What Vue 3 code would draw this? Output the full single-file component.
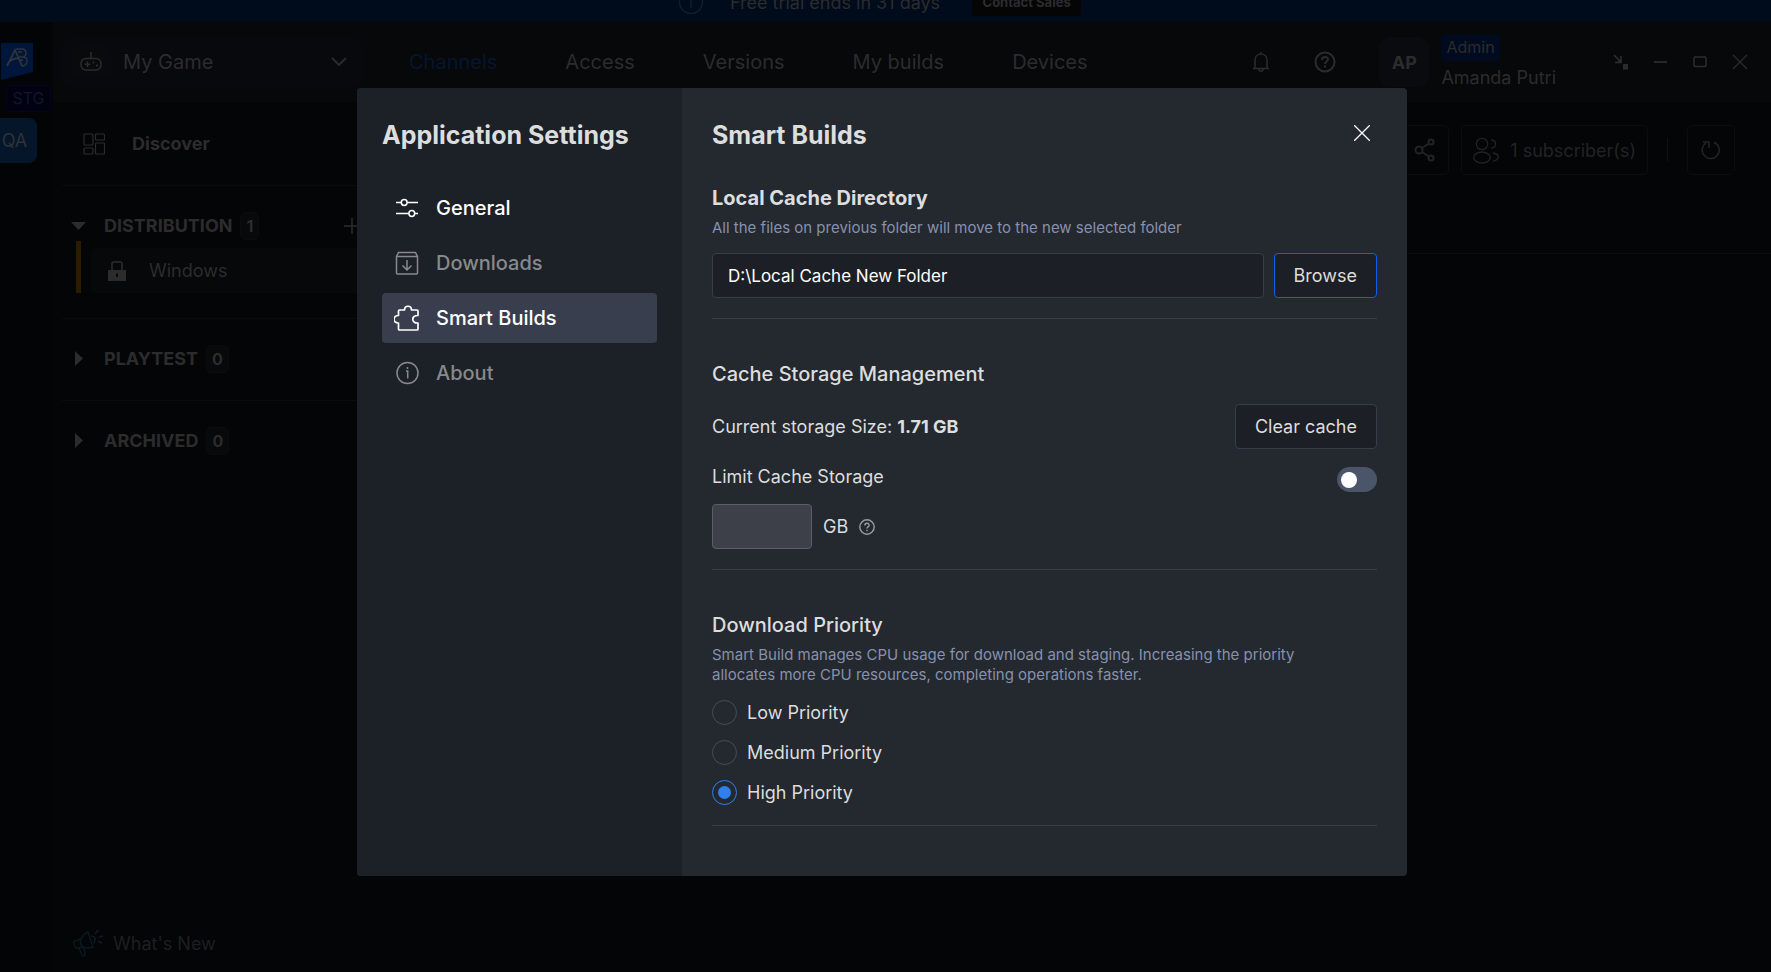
<script setup>
import { ref } from 'vue'

const tabs = ['Channels', 'Access', 'Versions', 'My builds', 'Devices']
const activeTab = ref('Channels')

const groups = ref([
  { name: 'DISTRIBUTION', count: 1, open: true, items: ['Windows'] },
  { name: 'PLAYTEST', count: 0, open: false, items: [] },
  { name: 'ARCHIVED', count: 0, open: false, items: [] },
])

const sections = [
  { id: 'general', label: 'General', bright: true },
  { id: 'downloads', label: 'Downloads', bright: false },
  { id: 'smart', label: 'Smart Builds', bright: true },
  { id: 'about', label: 'About', bright: false },
]
const activeSection = ref('smart')

const cacheDir = ref('D:\\Local Cache New Folder')
const limitCache = ref(false)
const limitSize = ref('')
const priorities = ['Low Priority', 'Medium Priority', 'High Priority']
const priority = ref('High Priority')
</script>

<template>
  <div class="app">
    <div class="banner">
      <div class="banner-inner">
        <svg class="banner-icon" width="26" height="26" viewBox="0 0 26 26" fill="none" stroke="currentColor" stroke-width="1.5">
          <circle cx="13" cy="13" r="11.5" />
          <path d="M13 11v8M13 7v2" />
        </svg>
        <span class="banner-text">Free trial ends in 31 days</span>
        <button class="banner-button" type="button">Contact Sales</button>
      </div>
    </div>

    <div class="shell">
      <aside class="rail">
        <svg class="logo" width="33" height="37" viewBox="0 0 33 37" fill="none">
          <path d="M1 0h32v29L1 37z" fill="#00163b" />
          <path d="M7 23L15 7l7 16M10 18q4-3 9-3" stroke="#30353c" stroke-width="1.8" />
          <path d="M16 6h6q4 0 4 4t-4 4h-3M18 9h4M22 14q6 0 5 5-1 4-5 4M20 17h3" stroke="#30353c" stroke-width="1.3" />
        </svg>
        <span class="stage">STG</span>
        <button class="workspace" type="button">QA</button>
      </aside>

      <div class="workarea">
        <header class="topbar">
          <button class="game" type="button">
            <span class="game-icon">
              <svg width="22" height="20" viewBox="0 0 22 20" fill="none" stroke="currentColor" stroke-width="1.5">
                <path d="M11 0v6" />
                <rect x="1" y="6.5" width="20" height="11.5" rx="5" />
                <path d="M7.500 9.500v5.500M4.750 12.250h5.500" />
                <path d="M12.500 10.500h1.800M16 13.500h1.800" stroke-width="1.800" />
              </svg>
            </span>
            <span class="game-name">My Game</span>
            <svg width="16" height="10" viewBox="0 0 16 10" fill="none" stroke="currentColor" stroke-width="1.8">
              <path d="M1 1l7 7 7-7" />
            </svg>
          </button>

          <nav class="tabs">
            <a v-for="t in tabs" :key="t" href="#" :class="['tab', { active: t === activeTab }]" @click.prevent="activeTab = t">{{ t }}</a>
          </nav>

          <div class="top-icons">
            <button class="icon-button" type="button" aria-label="Notifications">
              <svg width="18" height="20" viewBox="0 0 18 20" fill="none" stroke="currentColor" stroke-width="1.5">
                <path d="M9 0v2M1 16.500h16M3 16.500V8c0-8 12-8 12 0v8.500M7 17c0 3 4 3 4 0" />
              </svg>
            </button>
            <button class="icon-button" type="button" aria-label="Help">
              <svg width="22" height="22" viewBox="0 0 22 22" fill="none" stroke="currentColor" stroke-width="2">
                <circle cx="11" cy="11" r="9.500" />
                <path d="M8 9c0-4 6-4 6-.500 0 2-3 2-3 4.500M11 14.500v2" />
              </svg>
            </button>
          </div>

          <div class="user">
            <span class="avatar">AP</span>
            <div class="user-info">
              <span class="role">Admin</span>
              <span class="user-name">Amanda Putri</span>
            </div>
          </div>

          <div class="window-controls">
            <button class="icon-button" type="button" aria-label="Compact view">
              <svg width="16" height="16" viewBox="0 0 16 16" fill="none" stroke="currentColor" stroke-width="1.600">
                <path d="M1 1l6 6M8 2v6.500H2" />
                <path d="M4 8.500h4V4z" fill="currentColor" stroke="none" />
                <rect x="10" y="10" width="5" height="5.500" fill="currentColor" stroke="none" />
              </svg>
            </button>
            <button class="icon-button" type="button" aria-label="Minimize">
              <svg width="14" height="14" viewBox="0 0 14 14" stroke="currentColor" stroke-width="1.800"><path d="M0 7h13" /></svg>
            </button>
            <button class="icon-button" type="button" aria-label="Maximize">
              <svg width="14" height="14" viewBox="0 0 14 14" fill="none" stroke="currentColor" stroke-width="1.500"><rect x="1" y="2" width="12" height="9.500" rx="1" /></svg>
            </button>
            <button class="icon-button" type="button" aria-label="Close window">
              <svg width="16" height="16" viewBox="0 0 16 16" stroke="currentColor" stroke-width="1.300"><path d="M1 1l14 14M15 1L1 15" /></svg>
            </button>
          </div>
        </header>

        <div class="content">
          <nav class="sidebar">
            <a class="discover" href="#" @click.prevent>
              <svg width="22" height="22" viewBox="0 0 22 22" fill="none" stroke="currentColor" stroke-width="1.200">
                <rect x="1" y="1" width="9" height="11" rx="1" />
                <rect x="12.500" y="1" width="9" height="6" rx="1" />
                <rect x="1" y="15" width="9" height="6" rx="1" />
                <rect x="12.500" y="10" width="9" height="11" rx="1" />
              </svg>
              <span>Discover</span>
            </a>

            <section v-for="g in groups" :key="g.name" class="group">
              <div class="group-head">
                <button class="group-toggle" type="button" :aria-expanded="g.open" @click="g.open = !g.open">
                  <span class="caret">
                    <svg v-if="g.open" width="15" height="8" viewBox="0 0 15 8" fill="currentColor"><path d="M0 0h15L7.500 8z" /></svg>
                    <svg v-else width="8" height="15" viewBox="0 0 8 15" fill="currentColor"><path d="M0 0v15l8-7.500z" /></svg>
                  </span>
                  <span>{{ g.name }}</span>
                  <span class="count">{{ g.count }}</span>
                </button>
                <button v-if="g.open" class="icon-button" type="button" aria-label="Add channel">
                  <svg width="16" height="16" viewBox="0 0 16 16" stroke="currentColor" stroke-width="1.500"><path d="M8 0v16M0 8h16" /></svg>
                </button>
              </div>
              <ul v-if="g.open" class="channels">
                <li v-for="item in g.items" :key="item">
                  <a class="channel" href="#" @click.prevent>
                    <svg width="18" height="20" viewBox="0 0 18 20">
                      <path d="M4 9V3q0-2 2-2h6q2 0 2 2v6" fill="none" stroke="currentColor" stroke-width="1.500" />
                      <path d="M0 9h18v11H0z" fill="currentColor" />
                      <path d="M8 12.500h2V16H8z" fill="#060809" />
                    </svg>
                    <span>{{ item }}</span>
                  </a>
                </li>
              </ul>
            </section>

            <a class="whats-new" href="#" @click.prevent>
              <svg width="30" height="27" viewBox="0 0 30 27" fill="none" stroke-width="1.500">
                <path d="M8 9l-6 2q-2 1-1 3l1 3q1 2 3 1l5-1M6 18l3 7q1 2 3 0v-3l-2-4M8 9q2-5 7-7l5 15q-6 2-10 0M8 9q-2 5 2 8" stroke="#071a22" />
                <path d="M18 6q6 0 3 7M22 4l3-4M26 7l4-1M25 11l4 2" stroke="#16191d" />
              </svg>
              <span>What's New</span>
            </a>
          </nav>

          <main class="main">
            <div class="toolbar">
              <button class="tool square" type="button" aria-label="Share">
                <svg width="22" height="24" viewBox="0 0 22 24" fill="none" stroke="currentColor" stroke-width="2">
                  <circle cx="5" cy="12" r="3.500" />
                  <circle cx="17" cy="4" r="2.500" />
                  <circle cx="17" cy="20" r="2.500" />
                  <path d="M8 10l7-4.500M8 14l7 4.500" />
                </svg>
              </button>
              <button class="tool" type="button">
                <svg width="26" height="27" viewBox="0 0 26 27" fill="none" stroke="currentColor" stroke-width="1.300">
                  <circle cx="9" cy="7" r="5.700" />
                  <ellipse cx="9" cy="20.500" rx="8.300" ry="5.500" />
                  <path d="M18 3c6 0 6 8 0 8M20 16c7 1 7 7 0 8" />
                </svg>
                <span>1 subscriber(s)</span>
              </button>
              <span class="divider"></span>
              <button class="tool square" type="button" aria-label="Refresh">
                <svg width="20" height="20" viewBox="0 0 20 20" fill="none" stroke="currentColor" stroke-width="1.500">
                  <path d="M13 2.200A8.500 8.500 0 1 1 5 3M2 2h6v6" />
                </svg>
              </button>
            </div>
          </main>
        </div>
      </div>
    </div>

    <div class="overlay">
      <div class="modal" role="dialog" aria-modal="true" aria-labelledby="settings-title">
        <div class="modal-nav">
          <h1 id="settings-title">Application Settings</h1>
          <nav class="section-list">
            <button
              v-for="s in sections"
              :key="s.id"
              type="button"
              :class="['section-item', { bright: s.bright, selected: s.id === activeSection }]"
              @click="activeSection = s.id"
            >
              <svg v-if="s.id === 'general'" width="26" height="26" viewBox="0 0 26 26" fill="none" stroke="currentColor" stroke-width="1.500">
                <path d="M2 7.500h5.500M13 7.500h11M2 18.500h13M21 18.500h3" />
                <circle cx="10.200" cy="7.500" r="2.900" />
                <circle cx="17.800" cy="18.500" r="2.900" />
              </svg>
              <svg v-else-if="s.id === 'downloads'" width="26" height="26" viewBox="0 0 26 26" fill="none" stroke="currentColor" stroke-width="1.500">
                <path d="M2.500 6.500V23q0 1 1 1h19q1 0 1-1V6.500zM2.500 6.500l2-4h17l2 4M13 10v10M8.500 15.500L13 20l4.500-4.500" />
              </svg>
              <svg v-else-if="s.id === 'smart'" width="26" height="26" viewBox="0 0 26 26" fill="none" stroke="currentColor" stroke-width="1.700" stroke-linejoin="round">
                <path d="M4.500 6q0-1 1-1h5c0-5 7-5 7 0h5.500q1 0 1 1v4.500c-7-.500-7 8 0 7.500V24q0 1-1 1H5.500q-1 0-1-1v-6c-6 .500-6-8 0-7.500z" />
              </svg>
              <svg v-else width="26" height="26" viewBox="0 0 26 26" fill="none" stroke="currentColor" stroke-width="1.500">
                <circle cx="13.500" cy="13" r="10.500" />
                <path d="M12 11h1.700v7.500M13.500 7v2" />
              </svg>
              <span>{{ s.label }}</span>
            </button>
          </nav>
        </div>

        <div class="modal-body">
          <div class="modal-head">
            <h2>Smart Builds</h2>
            <button class="close" type="button" aria-label="Close">
              <svg width="16" height="16" viewBox="0 0 16 16" stroke="currentColor" stroke-width="1.300"><path d="M0 0l16 16M16 0L0 16" /></svg>
            </button>
          </div>

          <section class="setting">
            <h3 id="cache-dir-title" class="strong">Local Cache Directory</h3>
            <p class="hint">All the files on previous folder will move to the new selected folder</p>
            <div class="path-row">
              <input v-model="cacheDir" class="path" type="text" aria-labelledby="cache-dir-title" />
              <button class="action primary" type="button">Browse</button>
            </div>
          </section>

          <section class="setting">
            <h3>Cache Storage Management</h3>
            <div class="size-row">
              <span>Current storage Size: <b>1.71 GB</b></span>
              <button class="action" type="button">Clear cache</button>
            </div>
            <div class="limit-row">
              <label for="limit-cache">Limit Cache Storage</label>
              <input id="limit-cache" v-model="limitCache" class="switch" type="checkbox" role="switch" />
            </div>
            <div class="limit-size">
              <input id="limit-size" v-model="limitSize" class="size" type="text" :disabled="!limitCache" />
              <label for="limit-size">GB</label>
              <svg class="help" width="16" height="16" viewBox="0 0 16 16" fill="none" stroke="currentColor" stroke-width="1.400">
                <circle cx="8" cy="8" r="7.200" />
                <path d="M5.800 6.500c0-3 4.400-3 4.400-.300 0 1.500-2.200 1.500-2.200 3.300M8 10.700v1.500" />
              </svg>
            </div>
          </section>

          <section class="setting">
            <h3>Download Priority</h3>
            <p class="hint">Smart Build manages CPU usage for download and staging. Increasing the priority allocates more CPU resources, completing operations faster.</p>
            <div class="radios">
              <label v-for="p in priorities" :key="p" class="radio">
                <input v-model="priority" type="radio" name="priority" :value="p" />
                <span>{{ p }}</span>
              </label>
            </div>
          </section>
        </div>
      </div>
    </div>
  </div>
</template>

<style>
body {
  background: #040507;
}
</style>

<style scoped>
* {
  box-sizing: border-box;
}

.app {
  position: relative;
  display: flex;
  flex-direction: column;
  min-height: 100vh;
  overflow: hidden;
  background: #040507;
  color: #2c2c2d;
  font-family: Inter, "Liberation Sans", sans-serif;
  font-size: 18px;
}

button {
  padding: 0;
  border: 0;
  background: none;
  color: inherit;
  font: inherit;
}

input {
  margin: 0;
  font: inherit;
}

a {
  color: inherit;
  text-decoration: none;
}

svg {
  flex: none;
  display: block;
}

h1,
h2,
h3,
p,
ul {
  margin: 0;
  padding: 0;
  list-style: none;
}

/* Trial banner */
.banner {
  display: flex;
  flex-direction: column;
  justify-content: flex-end;
  height: 22px;
  overflow: hidden;
  background: #000b1c;
}

.banner-inner {
  flex: none;
  display: flex;
  align-items: center;
  justify-content: center;
  height: 40px;
  padding-right: 12px;
}

.banner-icon {
  margin-right: 26px;
  color: #121c2b;
}

.banner-text {
  margin-right: 32px;
}

.banner-button {
  width: 109px;
  height: 28px;
  border-radius: 4px;
  background: #050506;
  font-size: 13px;
  font-weight: 700;
}

/* Shell */
.shell {
  flex: 1;
  display: flex;
}

.rail {
  flex: none;
  display: flex;
  flex-direction: column;
  align-items: flex-start;
  width: 53px;
  padding-top: 21px;
  background: #030405;
}

.stage {
  width: 45px;
  height: 27px;
  margin: 5px 0 6px 6px;
  border: 1px solid #030322;
  border-radius: 2px;
  background: #01010f;
  color: #111534;
  font-size: 16px;
  line-height: 25px;
  text-align: center;
}

.workspace {
  width: 37px;
  height: 45px;
  padding-right: 8px;
  border-radius: 0 8px 8px 0;
  background: #06162a;
  color: #2d3238;
}

.workarea {
  flex: 1;
  display: flex;
  flex-direction: column;
  min-width: 0;
}

.topbar {
  display: flex;
  align-items: center;
  height: 80px;
  padding: 0 23px 0 9px;
  background: #070809;
}

.game {
  display: flex;
  align-items: center;
  width: 300px;
  height: 50px;
  padding: 0 15px 0 9px;
  border-radius: 8px;
  background: #08090d;
}

.game-icon {
  display: grid;
  place-items: center;
  width: 40px;
  height: 32px;
  margin-right: 12px;
  border-radius: 6px;
  background: #090a0c;
}

.game-name {
  flex: 1;
  font-size: 20px;
  text-align: left;
}

.tabs {
  display: flex;
  gap: 68px;
  margin-left: 47px;
  font-size: 20px;
}

.tab.active {
  color: #061530;
}

.top-icons {
  display: flex;
  align-items: center;
  gap: 44px;
  margin-left: auto;
}

.user {
  display: flex;
  align-items: center;
  gap: 12px;
  margin-left: 43px;
}

.avatar {
  display: grid;
  place-items: center;
  width: 50px;
  height: 50px;
  border-radius: 12px;
  background: #0a0b0e;
  font-weight: 700;
}

.user-info {
  display: flex;
  flex-direction: column;
  align-items: flex-start;
  gap: 6px;
  padding-bottom: 2px;
}

.role {
  height: 27px;
  padding: 0 5px;
  border-radius: 4px;
  background: #000b20;
  font-size: 16px;
  line-height: 27px;
}

.user-name {
  line-height: 22px;
}

.window-controls {
  display: flex;
  align-items: center;
  gap: 25px;
  margin-left: 57px;
}

.content {
  flex: 1;
  display: flex;
}

/* Sidebar */
.sidebar {
  flex: none;
  display: flex;
  flex-direction: column;
  width: 316px;
  padding: 0 0 15px 9px;
}

.discover {
  display: flex;
  align-items: center;
  gap: 27px;
  height: 84px;
  padding: 0 0 0 21px;
  border-bottom: 1px solid #0a0b0c;
  font-weight: 700;
}

.group {
  min-height: 82px;
  padding: 25px 0 0 9px;
}

.group + .group {
  border-top: 1px solid #0a0b0c;
}

.group-head {
  display: flex;
  align-items: center;
  justify-content: space-between;
  height: 29px;
  padding-right: 9px;
}

.group-toggle {
  display: flex;
  align-items: center;
  font-weight: 700;
}

.caret {
  display: grid;
  place-items: center;
  width: 15px;
  margin-right: 18px;
}

.count {
  height: 28px;
  min-width: 19px;
  margin-left: 8px;
  padding: 0 5px;
  border: 1px solid #0b0c0e;
  border-radius: 5px;
  background: #08090a;
  font-size: 16px;
  line-height: 26px;
}

.channels {
  margin: 1px 0 25px 5px;
  padding: 7px 0 0 10px;
  border-left: 5px solid #2b1c00;
}

.channel {
  display: flex;
  align-items: center;
  gap: 23px;
  height: 45px;
  padding-left: 17px;
  border-radius: 4px;
  background: #060809;
}

.whats-new {
  display: flex;
  align-items: center;
  gap: 10px;
  margin-top: auto;
  padding-left: 11px;
  color: #1d1f22;
}

/* Main area */
.main {
  flex: 1;
}

.toolbar {
  display: flex;
  align-items: flex-start;
  justify-content: flex-end;
  height: 152px;
  padding: 23px 36px 0 0;
  border-bottom: 1px solid #0b0c0d;
  color: #222324;
}

.tool {
  display: flex;
  align-items: center;
  justify-content: center;
  gap: 11px;
  height: 50px;
  margin-left: 12px;
  padding: 0 11px;
  border: 1px solid #0c0d0e;
  border-radius: 5px;
}

.tool.square {
  width: 48px;
  padding: 0;
}

.divider {
  width: 1px;
  height: 24px;
  margin: 13px 7px 0 19px;
  background: #101112;
}

/* Settings dialog */
.overlay {
  position: absolute;
  inset: 0;
  display: flex;
  align-items: center;
  justify-content: center;
  padding: 0 7px 8px 0;
}

.modal {
  display: grid;
  grid-template-columns: 325px minmax(0, 1fr);
  width: 100%;
  max-width: 1050px;
  border-radius: 4px;
  overflow: hidden;
  background: #24282f;
  color: #dcdddd;
}

.modal-nav {
  padding: 32px 25px;
  background: #1c2027;
}

h1,
h2 {
  font-size: 25px;
  font-weight: 700;
  line-height: 30px;
}

.section-list {
  display: flex;
  flex-direction: column;
  gap: 5px;
  margin-top: 33px;
}

.section-item {
  display: flex;
  align-items: center;
  gap: 16px;
  height: 50px;
  padding: 0 12px;
  border-radius: 4px;
  color: #87898d;
  font-size: 20px;
  font-weight: 500;
}

.section-item.bright {
  color: #ffffff;
}

.section-item.selected {
  background: #393e4e;
}

.modal-body {
  padding: 32px 30px 50px;
}

.modal-head {
  display: flex;
  align-items: flex-start;
  justify-content: space-between;
}

.close {
  padding: 5px 7px;
  color: #ffffff;
}

.setting {
  padding: 42px 0 20px;
  border-bottom: 1px solid #373d4c;
}

.modal-head + .setting {
  padding-top: 35px;
}

h3 {
  font-size: 20px;
  font-weight: 500;
  line-height: 26px;
}

h3.strong {
  font-weight: 700;
}

.hint {
  max-width: 620px;
  margin: 7px 0 15px;
  color: #8791ad;
  font-size: 15px;
  line-height: 20px;
}

.path-row {
  display: flex;
  gap: 10px;
}

.path {
  flex: 1;
  min-width: 0;
  height: 45px;
  padding: 0 15px;
  border: 1px solid #373d4c;
  border-radius: 4px;
  background: #1c2026;
  color: #ffffff;
  font-size: 17px;
}

.action {
  height: 45px;
  padding: 0 19px;
  border: 1px solid #373d4c;
  border-radius: 4px;
  background: #1c2026;
}

.action.primary {
  border-color: #0b62e4;
}

.size-row {
  display: flex;
  align-items: center;
  justify-content: space-between;
  margin-top: 17px;
}

.limit-row {
  display: flex;
  align-items: flex-start;
  justify-content: space-between;
  margin-top: 18px;
  line-height: 20px;
}

.switch {
  appearance: none;
  display: flex;
  align-items: center;
  width: 40px;
  height: 25px;
  padding: 0 4px;
  border-radius: 13px;
  background: #4b556a;
}

.switch::before {
  content: "";
  width: 16px;
  height: 16px;
  border-radius: 50%;
  background: #ffffff;
}

.switch:checked {
  justify-content: flex-end;
  background: #2f80ed;
}

.limit-size {
  display: flex;
  align-items: center;
  gap: 11px;
  margin-top: 12px;
}

.size {
  width: 100px;
  height: 45px;
  padding: 0 15px;
  border: 1px solid #5b5e64;
  border-radius: 4px;
  background: #3d4048;
  color: #ffffff;
}

.help {
  color: #9a9ca0;
}

.radios {
  display: flex;
  flex-direction: column;
  align-items: flex-start;
  gap: 15px;
}

.radio {
  display: flex;
  align-items: center;
  gap: 10px;
  height: 25px;
}

.radio input {
  appearance: none;
  display: grid;
  place-items: center;
  width: 25px;
  height: 25px;
  border: 1px solid #454b5b;
  border-radius: 50%;
}

.radio input:checked {
  border-color: #2f80ed;
}

.radio input:checked::before {
  content: "";
  width: 13px;
  height: 13px;
  border-radius: 50%;
  background: #2f80ed;
}
</style>
